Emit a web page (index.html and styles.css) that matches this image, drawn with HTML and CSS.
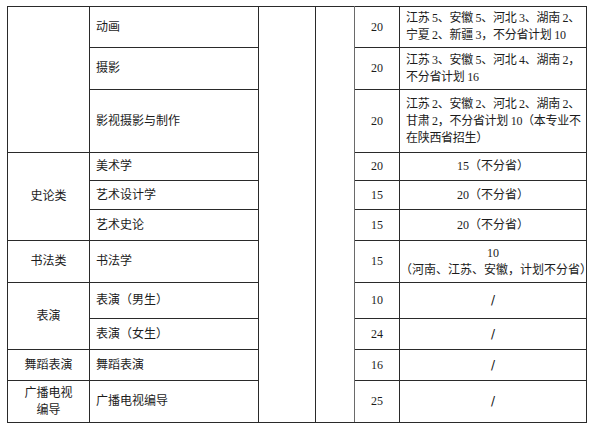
FILE: index.html
```html
<!DOCTYPE html>
<html lang="zh-CN">
<head>
<meta charset="utf-8">
<title>招生计划</title>
<link rel="stylesheet" href="styles.css">
</head>
<body>
<table class="plan">
  <colgroup>
    <col class="c-cat">
    <col class="c-major">
    <col class="c-e1">
    <col class="c-e2">
    <col class="c-num">
    <col class="c-note">
  </colgroup>
  <tbody>
    <tr class="r41">
      <td rowspan="3"></td>
      <td class="major">动画</td>
      <td rowspan="11"></td>
      <td rowspan="11" class="light"></td>
      <td class="num">20</td>
      <td class="note">江苏 5、安徽 5、河北 3、湖南 2、<br>宁夏 2、新疆 3，不分省计划 10</td>
    </tr>
    <tr class="r42">
      <td class="major">摄影</td>
      <td class="num">20</td>
      <td class="note">江苏 3、安徽 5、河北 4、湖南 2，<br>不分省计划 16</td>
    </tr>
    <tr class="r63">
      <td class="major">影视摄影与制作</td>
      <td class="num">20</td>
      <td class="note">江苏 2、安徽 2、河北 2、湖南 2、<br>甘肃 2，不分省计划 10（本专业不<br>在陕西省招生）</td>
    </tr>
    <tr class="r28">
      <td rowspan="3" class="cat">史论类</td>
      <td class="major">美术学</td>
      <td class="num">20</td>
      <td class="center">15（不分省）</td>
    </tr>
    <tr class="r29">
      <td class="major">艺术设计学</td>
      <td class="num">15</td>
      <td class="center">20（不分省）</td>
    </tr>
    <tr class="r31">
      <td class="major">艺术史论</td>
      <td class="num">15</td>
      <td class="center">20（不分省）</td>
    </tr>
    <tr class="r42">
      <td class="cat">书法类</td>
      <td class="major">书法学</td>
      <td class="num">15</td>
      <td class="center">10<br>（河南、江苏、安徽，计划不分省）</td>
    </tr>
    <tr class="r36">
      <td rowspan="2" class="cat">表演</td>
      <td class="major">表演（男生）</td>
      <td class="num">10</td>
      <td class="center slash">/</td>
    </tr>
    <tr class="r31">
      <td class="major">表演（女生）</td>
      <td class="num">24</td>
      <td class="center slash">/</td>
    </tr>
    <tr class="r31">
      <td class="cat">舞蹈表演</td>
      <td class="major">舞蹈表演</td>
      <td class="num">16</td>
      <td class="center slash">/</td>
    </tr>
    <tr class="r42">
      <td class="cat">广播电视<br>编导</td>
      <td class="major">广播电视编导</td>
      <td class="num">25</td>
      <td class="center slash">/</td>
    </tr>
  </tbody>
</table>
</body>
</html>
```
FILE: styles.css
```css
html, body {
  margin: 0;
  padding: 0;
  background: #ffffff;
}

body {
  padding: 6px 0 0 7px;
  font-family: "Liberation Serif", "Noto Sans CJK SC", serif;
  font-size: 12px;
  color: #1c1c1c;
}

.plan {
  border-collapse: collapse;
  table-layout: fixed;
  width: 579px;
}

.plan td {
  border: 1px solid #2a2a2a;
  padding: 0;
  vertical-align: middle;
  line-height: 17px;
  white-space: nowrap;
}

.plan td.light {
  border-left-color: #6a6a6a;
  border-right-color: #6a6a6a;
}

.c-cat { width: 82px; }
.c-major { width: 169px; }
.c-e1 { width: 57px; }
.c-e2 { width: 39px; }
.c-num { width: 45px; }
.c-note { width: 187px; }

.r28 { height: 28px; }
.r29 { height: 29px; }
.r31 { height: 31px; }
.r36 { height: 36px; }
.r41 { height: 41px; }
.r42 { height: 42px; }
.r63 { height: 63px; }

.cat {
  text-align: center;
}

.major {
  padding-left: 6px !important;
  text-align: left;
}

.num {
  text-align: center;
}

.note {
  padding-left: 6px !important;
  text-align: left;
  letter-spacing: -0.3px;
}

.center {
  text-align: center;
}

.slash {
  font-family: "DejaVu Sans", sans-serif;
  font-size: 12px;
  color: #111111;
}
```
